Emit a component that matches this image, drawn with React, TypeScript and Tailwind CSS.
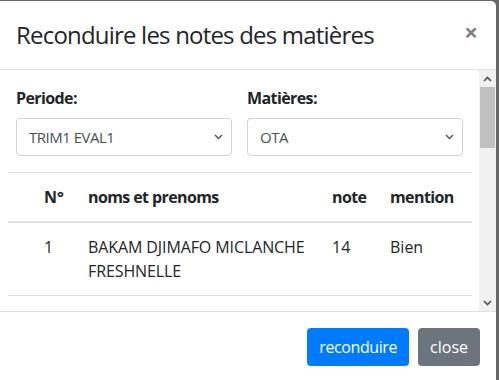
import React from "react";

const font = { fontFamily: '"Open Sans", "Noto Sans", Arial, sans-serif' };

function Chevron() {
  return (
    <svg width="9" height="6" viewBox="0 0 9 6" className="shrink-0">
      <path d="M1 1 L4.5 4.5 L8 1" stroke="#495057" strokeWidth="1.3" fill="none" />
    </svg>
  );
}

function Select({ value }: { value: string }) {
  return (
    <div className="flex h-[38px] items-center justify-between rounded-[4px] border border-[#ced4da] bg-white pl-3 pr-[8px] text-[15px] tracking-[-0.5px] text-[#495057]">
      <span>{value}</span>
      <Chevron />
    </div>
  );
}

function ScrollBar() {
  return (
    <div className="flex w-[17px] shrink-0 flex-col bg-[#f1f1f1]">
      <div className="flex h-[17px] items-center justify-center">
        <svg width="9" height="6" viewBox="0 0 9 6">
          <path d="M1 5 L4.5 1.5 L8 5" stroke="#505050" strokeWidth="1.6" fill="none" />
        </svg>
      </div>
      <div className="mx-[1px] h-[61px] bg-[#c1c1c1]" />
      <div className="flex-1" />
      <div className="flex h-[17px] items-center justify-center">
        <svg width="9" height="6" viewBox="0 0 9 6">
          <path d="M1 1 L4.5 4.5 L8 1" stroke="#505050" strokeWidth="1.6" fill="none" />
        </svg>
      </div>
    </div>
  );
}

export default function App() {
  const rows = [
    { n: "1", name: "BAKAM DJIMAFO MICLANCHE FRESHNELLE", note: "14", mention: "Bien" },
  ];
  const th = "border-b-2 border-[#dee2e6] p-3 text-left font-bold tracking-[-0.6px]";
  return (
    <div className="h-[380px] w-[499px] overflow-hidden bg-[#666666] pt-[1px] pr-[3px]" style={font}>
      <div className="flex h-[379px] flex-col overflow-hidden rounded-tr-[5px] bg-white text-[#212529]">
        <div className="flex h-[69px] shrink-0 items-start justify-between border-b border-[#dee2e6] px-4 pt-4">
          <h5 className="text-[24px] leading-[36px] font-normal tracking-[-0.8px]">Reconduire les notes des matières</h5>
          <span className="mr-[2px] mt-[-3px] text-[24px] leading-[36px] font-bold text-[#808080]">×</span>
        </div>
        <div className="flex h-[241px] shrink-0 overflow-hidden">
          <div className="min-w-0 flex-1 overflow-hidden p-4">
            <div className="grid grid-cols-2 gap-x-[15px]">
              <div>
                <div className="mb-2 text-[16px] leading-6 font-bold tracking-[-0.6px]">Periode:</div>
                <Select value="TRIM1 EVAL1" />
              </div>
              <div>
                <div className="mb-2 text-[16px] leading-6 font-bold tracking-[-0.6px]">Matières:</div>
                <Select value="OTA" />
              </div>
            </div>
            <table className="-mx-2 mt-4 w-[464px] table-fixed border-collapse text-[16px] leading-6">
              <colgroup>
                <col className="w-[24px]" />
                <col className="w-[44px]" />
                <col className="w-[244px]" />
                <col className="w-[58px]" />
                <col />
              </colgroup>
              <thead>
                <tr className="border-t border-[#dee2e6]">
                  <th className={th}></th>
                  <th className="border-b-2 border-[#dee2e6] py-3 pl-3 text-left font-bold whitespace-nowrap">N°</th>
                  <th className={th}>noms et prenoms</th>
                  <th className={th}>note</th>
                  <th className={th}>mention</th>
                </tr>
              </thead>
              <tbody>
                {rows.map((r) => (
                  <tr key={r.n} className="border-b border-[#dee2e6] align-top">
                    <td className="p-3"></td>
                    <td className="py-3 pl-3">{r.n}</td>
                    <td className="p-3 tracking-[-0.1px]">{r.name}</td>
                    <td className="p-3">{r.note}</td>
                    <td className="p-3">{r.mention}</td>
                  </tr>
                ))}
              </tbody>
            </table>
          </div>
          <ScrollBar />
        </div>
        <div className="flex flex-1 items-start justify-end gap-[9px] border-t border-[#dee2e6] px-4 pt-4">
          <button className="h-[38px] rounded-[4px] bg-[#007bff] px-3 text-[16px] tracking-[-0.4px] text-white">reconduire</button>
          <button className="h-[38px] rounded-[4px] bg-[#6c757d] px-3 text-[16px] text-white">close</button>
        </div>
      </div>
    </div>
  );
}
